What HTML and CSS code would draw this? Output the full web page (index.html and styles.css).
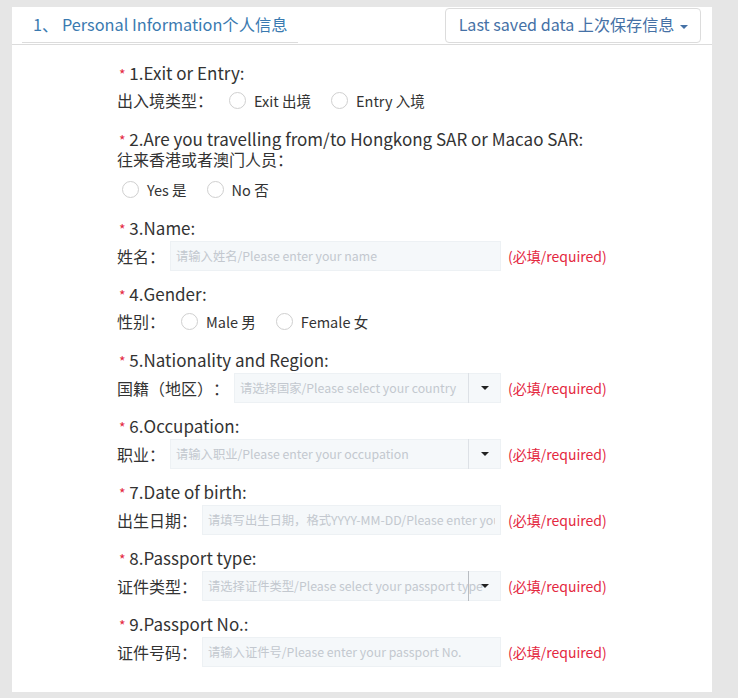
FILE: index.html
```html
<!DOCTYPE html>
<html>
<head>
<meta name="viewport" content="width=device-width, initial-scale=1">
<link rel="stylesheet" href="styles.css">
</head>
<body>
<div class="panel">
  <div class="panel-head">
    <div class="panel-title">1、 Personal Information个人信息</div>
    <button class="btn-saved" type="button">Last saved data 上次保存信息 <span class="caret"></span></button>
  </div>

  <form class="info-form">
    <div class="field">
      <div class="q-label"><span class="star">*</span> 1.Exit or Entry:</div>
      <div class="row row-radio">
        <span class="sub-label radio-label">出入境类型：</span>
        <label class="radio"><span class="dot"></span>Exit 出境</label>
        <label class="radio"><span class="dot"></span>Entry 入境</label>
      </div>
    </div>

    <div class="field">
      <div class="q-label"><span class="star">*</span> 2.Are you travelling from/to Hongkong SAR or Macao SAR:<br><span class="q-cn">往来香港或者澳门人员：</span></div>
      <div class="row row-radio row-loose">
        <label class="radio first"><span class="dot"></span>Yes 是</label>
        <label class="radio"><span class="dot"></span>No 否</label>
      </div>
    </div>

    <div class="field">
      <div class="q-label"><span class="star">*</span> 3.Name:</div>
      <div class="row">
        <div class="input-line">
          <span class="sub-label">姓名：</span>
          <input class="text-input" type="text" placeholder="请输入姓名/Please enter your name">
        </div>
        <span class="required">(必填/required)</span>
      </div>
    </div>

    <div class="field">
      <div class="q-label"><span class="star">*</span> 4.Gender:</div>
      <div class="row row-radio">
        <span class="sub-label radio-label">性别：</span>
        <label class="radio"><span class="dot"></span>Male 男</label>
        <label class="radio"><span class="dot"></span>Female 女</label>
      </div>
    </div>

    <div class="field">
      <div class="q-label"><span class="star">*</span> 5.Nationality and Region:</div>
      <div class="row">
        <div class="input-line">
          <span class="sub-label">国籍（地区）：</span>
          <div class="select-box">
            <input class="text-input" type="text" placeholder="请选择国家/Please select your country">
            <span class="addon"><span class="caret dark"></span></span>
          </div>
        </div>
        <span class="required">(必填/required)</span>
      </div>
    </div>

    <div class="field">
      <div class="q-label"><span class="star">*</span> 6.Occupation:</div>
      <div class="row">
        <div class="input-line">
          <span class="sub-label">职业：</span>
          <div class="select-box">
            <input class="text-input" type="text" placeholder="请输入职业/Please enter your occupation">
            <span class="addon"><span class="caret dark"></span></span>
          </div>
        </div>
        <span class="required">(必填/required)</span>
      </div>
    </div>

    <div class="field">
      <div class="q-label"><span class="star">*</span> 7.Date of birth:</div>
      <div class="row">
        <div class="input-line">
          <span class="sub-label">出生日期：</span>
          <input class="text-input" type="text" placeholder="请填写出生日期，格式YYYY-MM-DD/Please enter your date of birth">
        </div>
        <span class="required">(必填/required)</span>
      </div>
    </div>

    <div class="field">
      <div class="q-label"><span class="star">*</span> 8.Passport type:</div>
      <div class="row">
        <div class="input-line">
          <span class="sub-label">证件类型：</span>
          <div class="select-box select-tight">
            <input class="text-input" type="text" placeholder="请选择证件类型/Please select your passport type">
            <span class="addon"><span class="caret dark"></span></span>
          </div>
        </div>
        <span class="required">(必填/required)</span>
      </div>
    </div>

    <div class="field">
      <div class="q-label"><span class="star">*</span> 9.Passport No.:</div>
      <div class="row">
        <div class="input-line">
          <span class="sub-label">证件号码：</span>
          <input class="text-input" type="text" placeholder="请输入证件号/Please enter your passport No.">
        </div>
        <span class="required">(必填/required)</span>
      </div>
    </div>
  </form>
</div>
</body>
</html>
```

FILE: styles.css
```css
body {
  margin: 0;
  padding: 7px 0 0 12px;
  background-color: #e6e6e6;
  font-family: "Noto Sans CJK SC", sans-serif;
  color: #333;
  text-spacing-trim: space-all;
}
.panel {
  width: 700px;
  height: 685px;
  background-color: #fff;
  box-sizing: border-box;
}
.panel-head {
  display: flex;
  justify-content: space-between;
  align-items: flex-start;
  height: 37px;
  border-bottom: 1px solid #dcdcdc;
}
.panel-title {
  margin-left: 10px;
  padding: 0 10px 0 11px;
  height: 35px;
  line-height: 35px;
  font-size: 16.3px;
  color: #3a7ab0;
  border-bottom: 1px solid #dcdcdc;
}
.btn-saved {
  margin: 1px 11px 0 0;
  height: 35px;
  padding: 0 12px 3px 13px;
  background-color: #fff;
  border: 1px solid #dcdcdc;
  border-radius: 4px;
  font-family: inherit;
  font-size: 16.1px;
  color: #4571a6;
  cursor: pointer;
}
.caret {
  display: inline-block;
  width: 0;
  height: 0;
  margin-left: 2px;
  vertical-align: middle;
  border-top: 4px solid #4571a6;
  border-left: 4px solid transparent;
  border-right: 4px solid transparent;
}
.caret.dark {
  margin: 0;
  border-top-color: #222;
}

.info-form {
  padding: 18px 0 0 105px;
}
.field {
  display: flow-root;
  margin-bottom: 13px;
}
.q-label {
  font-size: 17px;
  line-height: 20px;
}
.q-cn {
  font-size: 16px;
}
.star {
  padding-left: 2px;
  font-size: 14px;
  line-height: 1;
  color: #e4283f;
}
.row {
  display: flex;
  align-items: center;
  height: 30px;
  margin-top: 3px;
  font-size: 16px;
}
.row-radio {
  margin-top: 2px;
  margin-bottom: 1px;
}
.row-loose {
  margin-top: 5px;
}
.sub-label {
  margin-right: 5px;
  white-space: nowrap;
}
.radio-label {
  margin-right: 16px;
}
.radio {
  display: flex;
  align-items: center;
  margin-right: 20px;
  font-size: 14.5px;
  cursor: pointer;
}
.radio.first {
  margin-left: 5px;
}
.dot {
  width: 15px;
  height: 15px;
  margin-right: 8px;
  border: 1px solid #cfcfcf;
  border-radius: 50%;
  background-color: #fff;
}
.input-line {
  display: flex;
  align-items: center;
  width: 384px;
}
.text-input {
  flex: 1;
  min-width: 0;
  height: 30px;
  box-sizing: border-box;
  padding: 0 5px;
  background-color: #f5f8fa;
  border: 1px solid #edf1f4;
  font-family: inherit;
  font-size: 12.3px;
  color: #333;
  outline: none;
}
.text-input::placeholder {
  color: #c3c8cf;
}
.select-box {
  flex: 1;
  display: flex;
  position: relative;
}
.select-box .text-input {
  padding-right: 38px;
}
.select-tight .text-input {
  padding-right: 16px;
}
.addon {
  position: absolute;
  top: 0;
  right: 0;
  bottom: 0;
  width: 32px;
  display: flex;
  align-items: center;
  justify-content: center;
  border-left: 1px solid #dde1e6;
}
.select-tight .addon {
  border-left-color: #b9bdc2;
}
.required {
  margin-left: 7px;
  font-size: 14px;
  color: #e4283f;
}
```
